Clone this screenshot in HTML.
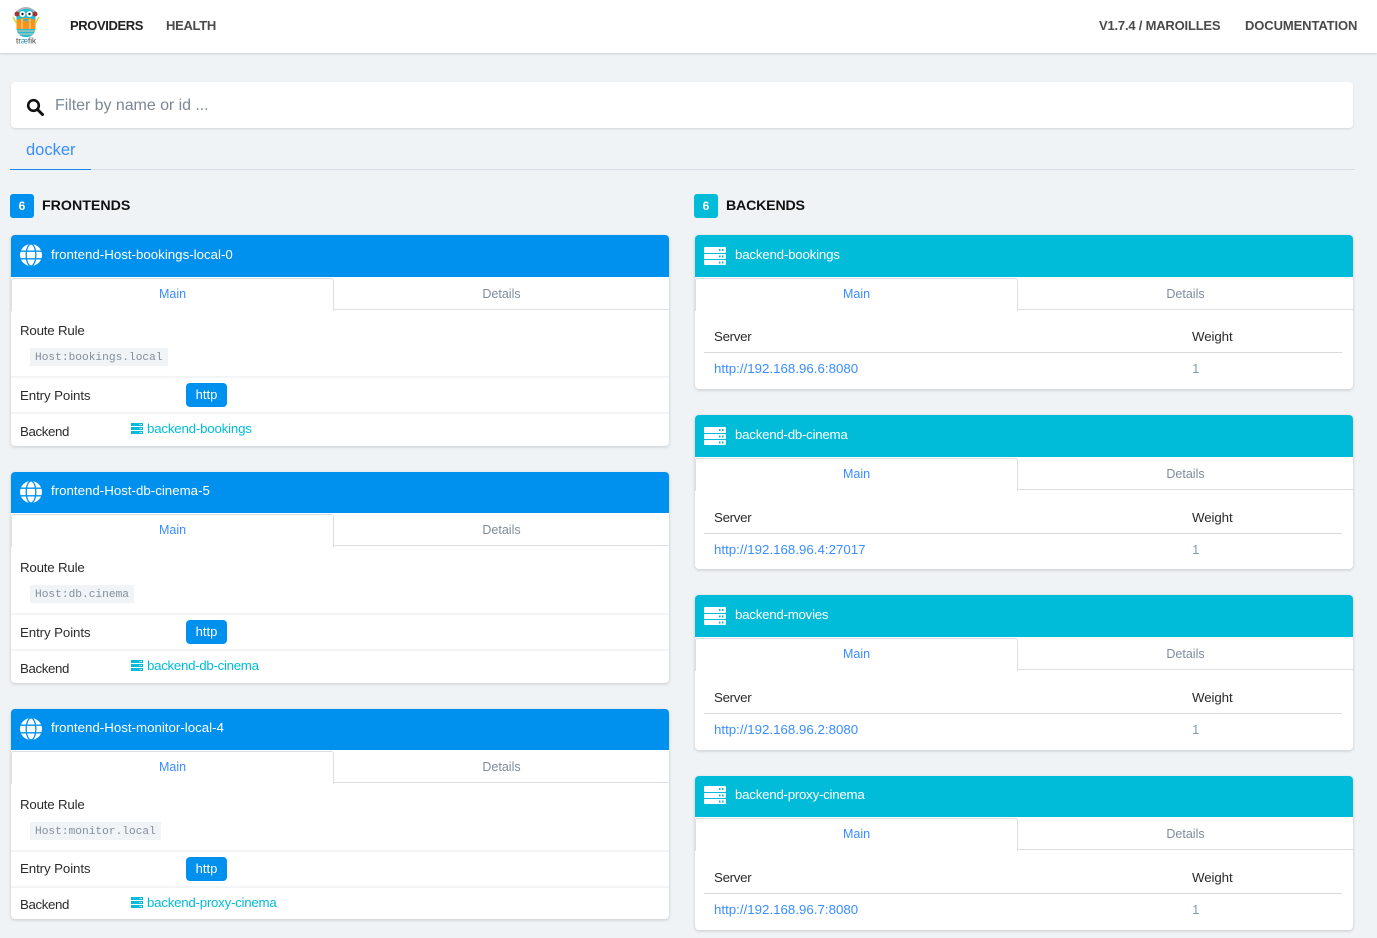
<!DOCTYPE html>
<html><head><meta charset="utf-8"><style>
html,body{margin:0;padding:0;width:1377px;height:938px;overflow:hidden;background:#eff3f6;font-family:"Liberation Sans",sans-serif;color:#2b2b2b}
div,a,span,svg{position:absolute;white-space:nowrap;box-sizing:border-box}
.t{font-size:13.3px;line-height:20px;height:20px;letter-spacing:-.2px;margin-top:1px}
.nav{font-size:13px;font-weight:bold;line-height:20px;top:16px;color:#4a4a4a}
.card{background:#fff;border-radius:4px;box-shadow:0 1px 3px rgba(10,10,10,.18)}
.hd{left:0;top:0;height:42px;border-radius:4px 4px 0 0;width:658px;color:#fff}
.hd .t{left:40px;top:8.5px}
.f .hd .t{letter-spacing:0}
.f .hd{background:#0091ef}.b .hd{background:#00bcd8}
.tabm{left:0;top:43px;width:323px;height:33px;border:1px solid #dbdfe3;border-bottom:0;border-radius:3px 3px 0 0;background:#fff;color:#3a8dff;text-align:center;font-size:12.5px;line-height:30px}
.tabd{left:323px;top:43px;width:335px;height:32px;border-bottom:1px solid #dbdfe3;color:#7f8c9b;text-align:center;font-size:12.5px;line-height:32px}
.dv{left:0;width:658px;height:2px;background:#f2f4f6}
.code{left:19px;top:113px;height:18px;background:#f1f4f6;color:#838e9c;font:11.2px/20px "Liberation Mono",monospace;padding:0 5px}
.btn{left:175px;top:148px;width:41px;height:24px;border-radius:4px;background:#0091ef;color:#fff;text-align:center;font-size:13px;line-height:24px}
.lnk{color:#00bcd8}.blue{color:#3a8dff;letter-spacing:0}
.srv{letter-spacing:-.3px}.lb{letter-spacing:-.4px}.ep{letter-spacing:-.1px}
</style></head><body>
<svg width="0" height="0" style="left:0;top:0"><defs>
<symbol id="globe" viewBox="0 0 22 22"><circle cx="11" cy="11" r="11" fill="#fff"/><g fill="none" stroke-width="1.300"><ellipse cx="11" cy="11" rx="4.800" ry="11" stroke="currentColor"/><path d="M0 7.200H22M0 14.800H22" stroke="currentColor"/></g></symbol>
<symbol id="srv" viewBox="0 0 22 18"><path fill="#fff" d="M1 0H21a1 1 0 0 1 1 1V5a1 1 0 0 1-1 1H1a1 1 0 0 1-1-1V1a1 1 0 0 1 1-1ZM1 7H21a1 1 0 0 1 1 1V11a1 1 0 0 1-1 1H1a1 1 0 0 1-1-1V8a1 1 0 0 1 1-1ZM1 13H21a1 1 0 0 1 1 1V17a1 1 0 0 1-1 1H1a1 1 0 0 1-1-1V14a1 1 0 0 1 1-1Z"/><path fill="#00bcd8" d="M15 2h1.500v2H15zM18 2h1.500v2H18zM15 8.500h1.500v2H15zM18 8.500h1.500v2H18zM15 14.500h1.500v2H15zM18 14.500h1.500v2H18z"/></symbol>
<symbol id="mini" viewBox="0 0 12 11"><path fill="#00bcd8" d="M0 0H12V3H0ZM0 4H12V7H0ZM0 8H12V11H0Z"/><path fill="#fff" d="M8.500 1h1v1h-1zM10 1h1v1h-1zM8.500 5h1v1h-1zM10 5h1v1h-1zM8.500 9h1v1h-1zM10 9h1v1h-1z"/></symbol>
</defs></svg>

<div style="left:0;top:0;width:1377px;height:53px;background:#fff;box-shadow:0 1px 2px rgba(10,10,10,.15)"></div>
<svg style="left:12px;top:5px" width="28" height="40" viewBox="0 0 28 40">
<path d="M5 7Q14 -1 23 7" fill="none" stroke="#aab2b5" stroke-width="2"/>
<rect x="4.500" y="4" width="19" height="28" rx="8.500" fill="#25bcd8"/>
<circle cx="5" cy="9" r="2.500" fill="#a8312f"/><circle cx="23" cy="9" r="2.500" fill="#a8312f"/>
<circle cx="10.500" cy="9" r="3" fill="#fff"/><circle cx="17.500" cy="9" r="3" fill="#fff"/>
<circle cx="10.500" cy="9" r="1.200" fill="#222"/><circle cx="17.500" cy="9" r="1.200" fill="#222"/>
<path d="M4.500 15L11 13H17L23.500 15V24H4.500Z" fill="#f7941e"/>
<path d="M10 14V24M18 14V24" stroke="#f9d7a8" stroke-width="1"/>
<path d="M11 14L14 17L17 14" fill="#25bcd8"/>
<path d="M1 12L5 19M27 12L23 19" stroke="#c8d84a" stroke-width="1.500"/>
<path d="M5 26H23M6 29H22" stroke="#e8c9a0" stroke-width="1"/>
<text x="14" y="38.500" font-size="8" text-anchor="middle" fill="#444" font-family="Liberation Sans">tr<tspan fill="#2a8fc0">æ</tspan>fik</text>
</svg>
<div class="nav" style="left:70px;color:#222;letter-spacing:-.4px">PROVIDERS</div>
<div class="nav" style="left:166px;letter-spacing:-.3px">HEALTH</div>
<div class="nav" style="left:1099px;letter-spacing:-.2px">V1.7.4 / MAROILLES</div>
<div class="nav" style="left:1245px;letter-spacing:-.1px">DOCUMENTATION</div>

<div class="card" style="left:11px;top:82px;width:1342px;height:46px;box-shadow:0 1px 2px rgba(10,10,10,.12)"></div>
<svg style="left:26px;top:98px" width="18" height="18" viewBox="0 0 18 18"><circle cx="7.500" cy="7.500" r="5.300" fill="none" stroke="#111" stroke-width="2.600"/><path d="M11.500 11.500L16.500 16.500" stroke="#111" stroke-width="3" stroke-linecap="round"/></svg>
<div style="left:55px;top:96px;font-size:16px;line-height:20px;color:#7d8894;letter-spacing:-.05px">Filter by name or id ...</div>

<div style="left:10px;top:169px;width:1345px;height:1px;background:#d6dde4"></div>
<div style="left:10px;top:169px;width:81px;height:1px;background:#1a85f0"></div>
<div style="left:26px;top:140px;font-size:16.500px;line-height:20px;color:#3a8dff">docker</div>

<div style="left:10px;top:194px;width:24px;height:24px;border-radius:3px;background:#0091ef;color:#fff;font-size:12px;font-weight:bold;text-align:center;line-height:24px">6</div>
<div style="left:42px;top:196px;font-size:14.200px;font-weight:bold;line-height:20px;color:#111">FRONTENDS</div>
<div style="left:694px;top:194px;width:24px;height:24px;border-radius:3px;background:#00bcd8;color:#fff;font-size:12px;font-weight:bold;text-align:center;line-height:24px">6</div>
<div style="left:726px;top:196px;font-size:14.200px;font-weight:bold;line-height:20px;color:#111;letter-spacing:-.2px">BACKENDS</div>

<!-- Frontends -->
<div class="card f" style="left:11px;top:235px;width:658px;height:211px">
<div class="hd"><svg style="left:9px;top:9px;color:#0091ef" width="22" height="22"><use href="#globe"/></svg><div class="t">frontend-Host-bookings-local-0</div></div>
<div class="tabm">Main</div><div class="tabd">Details</div>
<div class="t" style="left:9px;top:85px">Route Rule</div><div class="code">Host:bookings.local</div>
<div class="dv" style="top:141px"></div><div class="t ep" style="left:9px;top:150px">Entry Points</div><div class="btn">http</div>
<div class="dv" style="top:177px"></div><div class="t lb" style="left:9px;top:186px">Backend</div>
<svg style="left:120px;top:188px" width="12" height="11"><use href="#mini"/></svg><div class="t lnk" style="left:136px;top:183px">backend-bookings</div>
</div>
<div class="card f" style="left:11px;top:472px;width:658px;height:211px">
<div class="hd" style="height:41px"><svg style="left:9px;top:9px;color:#0091ef" width="22" height="22"><use href="#globe"/></svg><div class="t" style="top:8px">frontend-Host-db-cinema-5</div></div>
<div class="tabm" style="top:42px">Main</div><div class="tabd" style="top:42px">Details</div>
<div class="t" style="left:9px;top:85px">Route Rule</div><div class="code">Host:db.cinema</div>
<div class="dv" style="top:141px"></div><div class="t ep" style="left:9px;top:150px">Entry Points</div><div class="btn">http</div>
<div class="dv" style="top:177px"></div><div class="t lb" style="left:9px;top:186px">Backend</div>
<svg style="left:120px;top:188px" width="12" height="11"><use href="#mini"/></svg><div class="t lnk" style="left:136px;top:183px;letter-spacing:-.3px">backend-db-cinema</div>
</div>
<div class="card f" style="left:11px;top:709px;width:658px;height:210px">
<div class="hd" style="height:41px"><svg style="left:9px;top:9px;color:#0091ef" width="22" height="22"><use href="#globe"/></svg><div class="t" style="top:8px">frontend-Host-monitor-local-4</div></div>
<div class="tabm" style="top:42px">Main</div><div class="tabd" style="top:42px">Details</div>
<div class="t" style="left:9px;top:85px">Route Rule</div><div class="code">Host:monitor.local</div>
<div class="dv" style="top:141px"></div><div class="t ep" style="left:9px;top:149px">Entry Points</div><div class="btn">http</div>
<div class="dv" style="top:177px"></div><div class="t lb" style="left:9px;top:185px">Backend</div>
<svg style="left:120px;top:188px" width="12" height="11"><use href="#mini"/></svg><div class="t lnk" style="left:136px;top:183px;letter-spacing:-.25px">backend-proxy-cinema</div>
</div>

<!-- Backends -->
<div class="card b" style="left:695px;top:235px;width:658px;height:154px">
<div class="hd"><svg style="left:9px;top:12px" width="22" height="18"><use href="#srv"/></svg><div class="t">backend-bookings</div></div>
<div class="tabm">Main</div><div class="tabd">Details</div>
<div class="t srv" style="left:19px;top:91px">Server</div><div class="t" style="left:497px;top:91px;letter-spacing:-.1px">Weight</div>
<div style="left:9px;top:117px;width:638px;height:1px;background:#d9d9d9"></div>
<div class="t blue" style="left:19px;top:123px">http://192.168.96.6:8080</div><div class="t" style="left:497px;top:123px;color:#7f9db8">1</div>
</div>
<div class="card b" style="left:695px;top:415px;width:658px;height:154px">
<div class="hd"><svg style="left:9px;top:12px" width="22" height="18"><use href="#srv"/></svg><div class="t" style="letter-spacing:-.25px">backend-db-cinema</div></div>
<div class="tabm">Main</div><div class="tabd">Details</div>
<div class="t srv" style="left:19px;top:92px">Server</div><div class="t" style="left:497px;top:92px;letter-spacing:-.1px">Weight</div>
<div style="left:9px;top:118px;width:638px;height:1px;background:#d9d9d9"></div>
<div class="t blue" style="left:19px;top:124px">http://192.168.96.4:27017</div><div class="t" style="left:497px;top:124px;color:#7f9db8">1</div>
</div>
<div class="card b" style="left:695px;top:595px;width:658px;height:155px">
<div class="hd"><svg style="left:9px;top:12px" width="22" height="18"><use href="#srv"/></svg><div class="t" style="letter-spacing:-.25px">backend-movies</div></div>
<div class="tabm">Main</div><div class="tabd">Details</div>
<div class="t srv" style="left:19px;top:92px">Server</div><div class="t" style="left:497px;top:92px;letter-spacing:-.1px">Weight</div>
<div style="left:9px;top:118px;width:638px;height:1px;background:#d9d9d9"></div>
<div class="t blue" style="left:19px;top:124px">http://192.168.96.2:8080</div><div class="t" style="left:497px;top:124px;color:#7f9db8">1</div>
</div>
<div class="card b" style="left:695px;top:776px;width:658px;height:154px">
<div class="hd" style="height:41px"><svg style="left:9px;top:10px" width="22" height="18"><use href="#srv"/></svg><div class="t" style="top:8px;letter-spacing:-.25px">backend-proxy-cinema</div></div>
<div class="tabm" style="top:42px">Main</div><div class="tabd" style="top:42px">Details</div>
<div class="t srv" style="left:19px;top:91px">Server</div><div class="t" style="left:497px;top:91px;letter-spacing:-.1px">Weight</div>
<div style="left:9px;top:117px;width:638px;height:1px;background:#d9d9d9"></div>
<div class="t blue" style="left:19px;top:123px">http://192.168.96.7:8080</div><div class="t" style="left:497px;top:123px;color:#7f9db8">1</div>
</div>
</body></html>
